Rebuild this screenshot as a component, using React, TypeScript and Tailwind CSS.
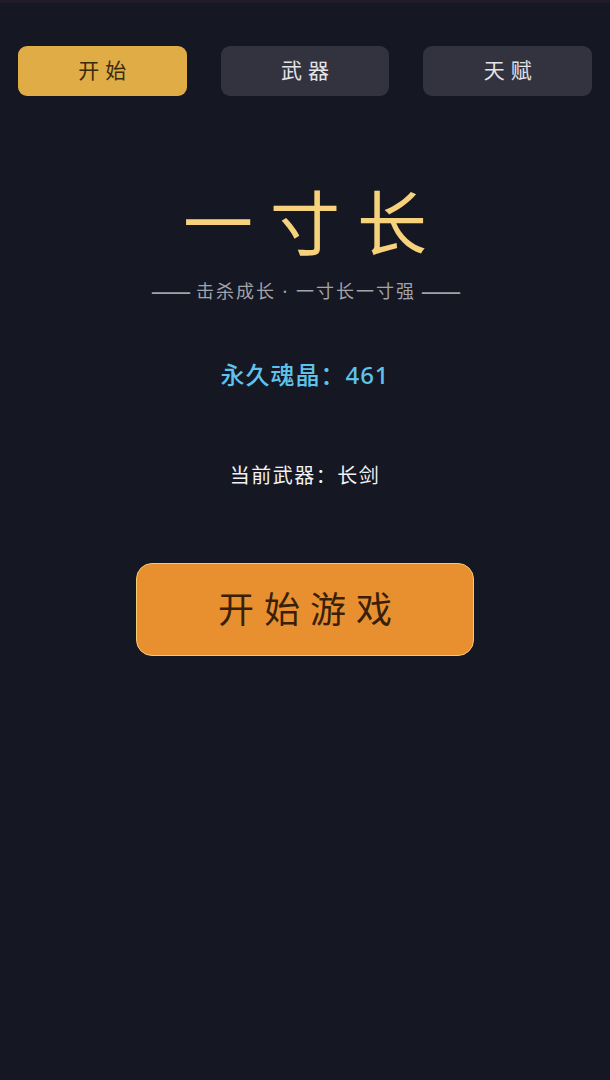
import React from "react";

export default function App() {
  const tabs = ["开始", "武器", "天赋"];
  return (
    <div
      className="min-h-[1080px] w-full bg-[#151722] flex flex-col"
      style={{ fontFamily: '"Noto Sans", "Noto Sans CJK SC", sans-serif' }}
    >
      <div className="h-[3px] bg-[#1f1b2b]" />
      <div className="grid grid-cols-3 gap-[34px] px-[18px] pt-[43px]">
        {tabs.map((t, i) => (
          <div
            key={t}
            className={
              i === 0
                ? "h-[50px] rounded-[9px] bg-[#e0ac45] text-[#3a2a10] flex items-center justify-center text-[21px] tracking-[6px] pl-[6px]"
                : "h-[50px] rounded-[9px] bg-[#33333f] text-[#e4e4e8] flex items-center justify-center text-[21px] tracking-[6px] pl-[6px]"
            }
          >
            {t}
          </div>
        ))}
      </div>
      <div className="flex flex-col items-center">
        <div className="mt-[92px] text-[70px] leading-none text-[#f6d27c] tracking-[17px] pl-[17px]">
          一寸长
        </div>
        <div className="mt-[24px] h-[18px] text-[18px] leading-none text-[#a2a3ab] flex items-center">
          <span className="text-[21px] leading-none tracking-[-2px] pr-[2px]">——</span>
          <span className="tracking-[2px] px-[5px]">击杀成长 · 一寸长一寸强</span>
          <span className="text-[21px] leading-none tracking-[-2px]">——</span>
        </div>
        <div className="mt-[63px] text-[24px] leading-none font-medium text-[#5ec3ec] tracking-[1px]">
          永久魂晶：461
        </div>
        <div className="mt-[79px] text-[20px] leading-none text-[#f2f2f4] tracking-[1.5px]">
          当前武器：长剑
        </div>
        <button className="mt-[77px] w-[338px] h-[93px] rounded-[16px] bg-[#e8902f] border-[1.5px] border-[#f6c872] text-[#3a1f08] text-[36px] tracking-[10px] pl-[10px] flex items-center justify-center">
          开始游戏
        </button>
      </div>
    </div>
  );
}
